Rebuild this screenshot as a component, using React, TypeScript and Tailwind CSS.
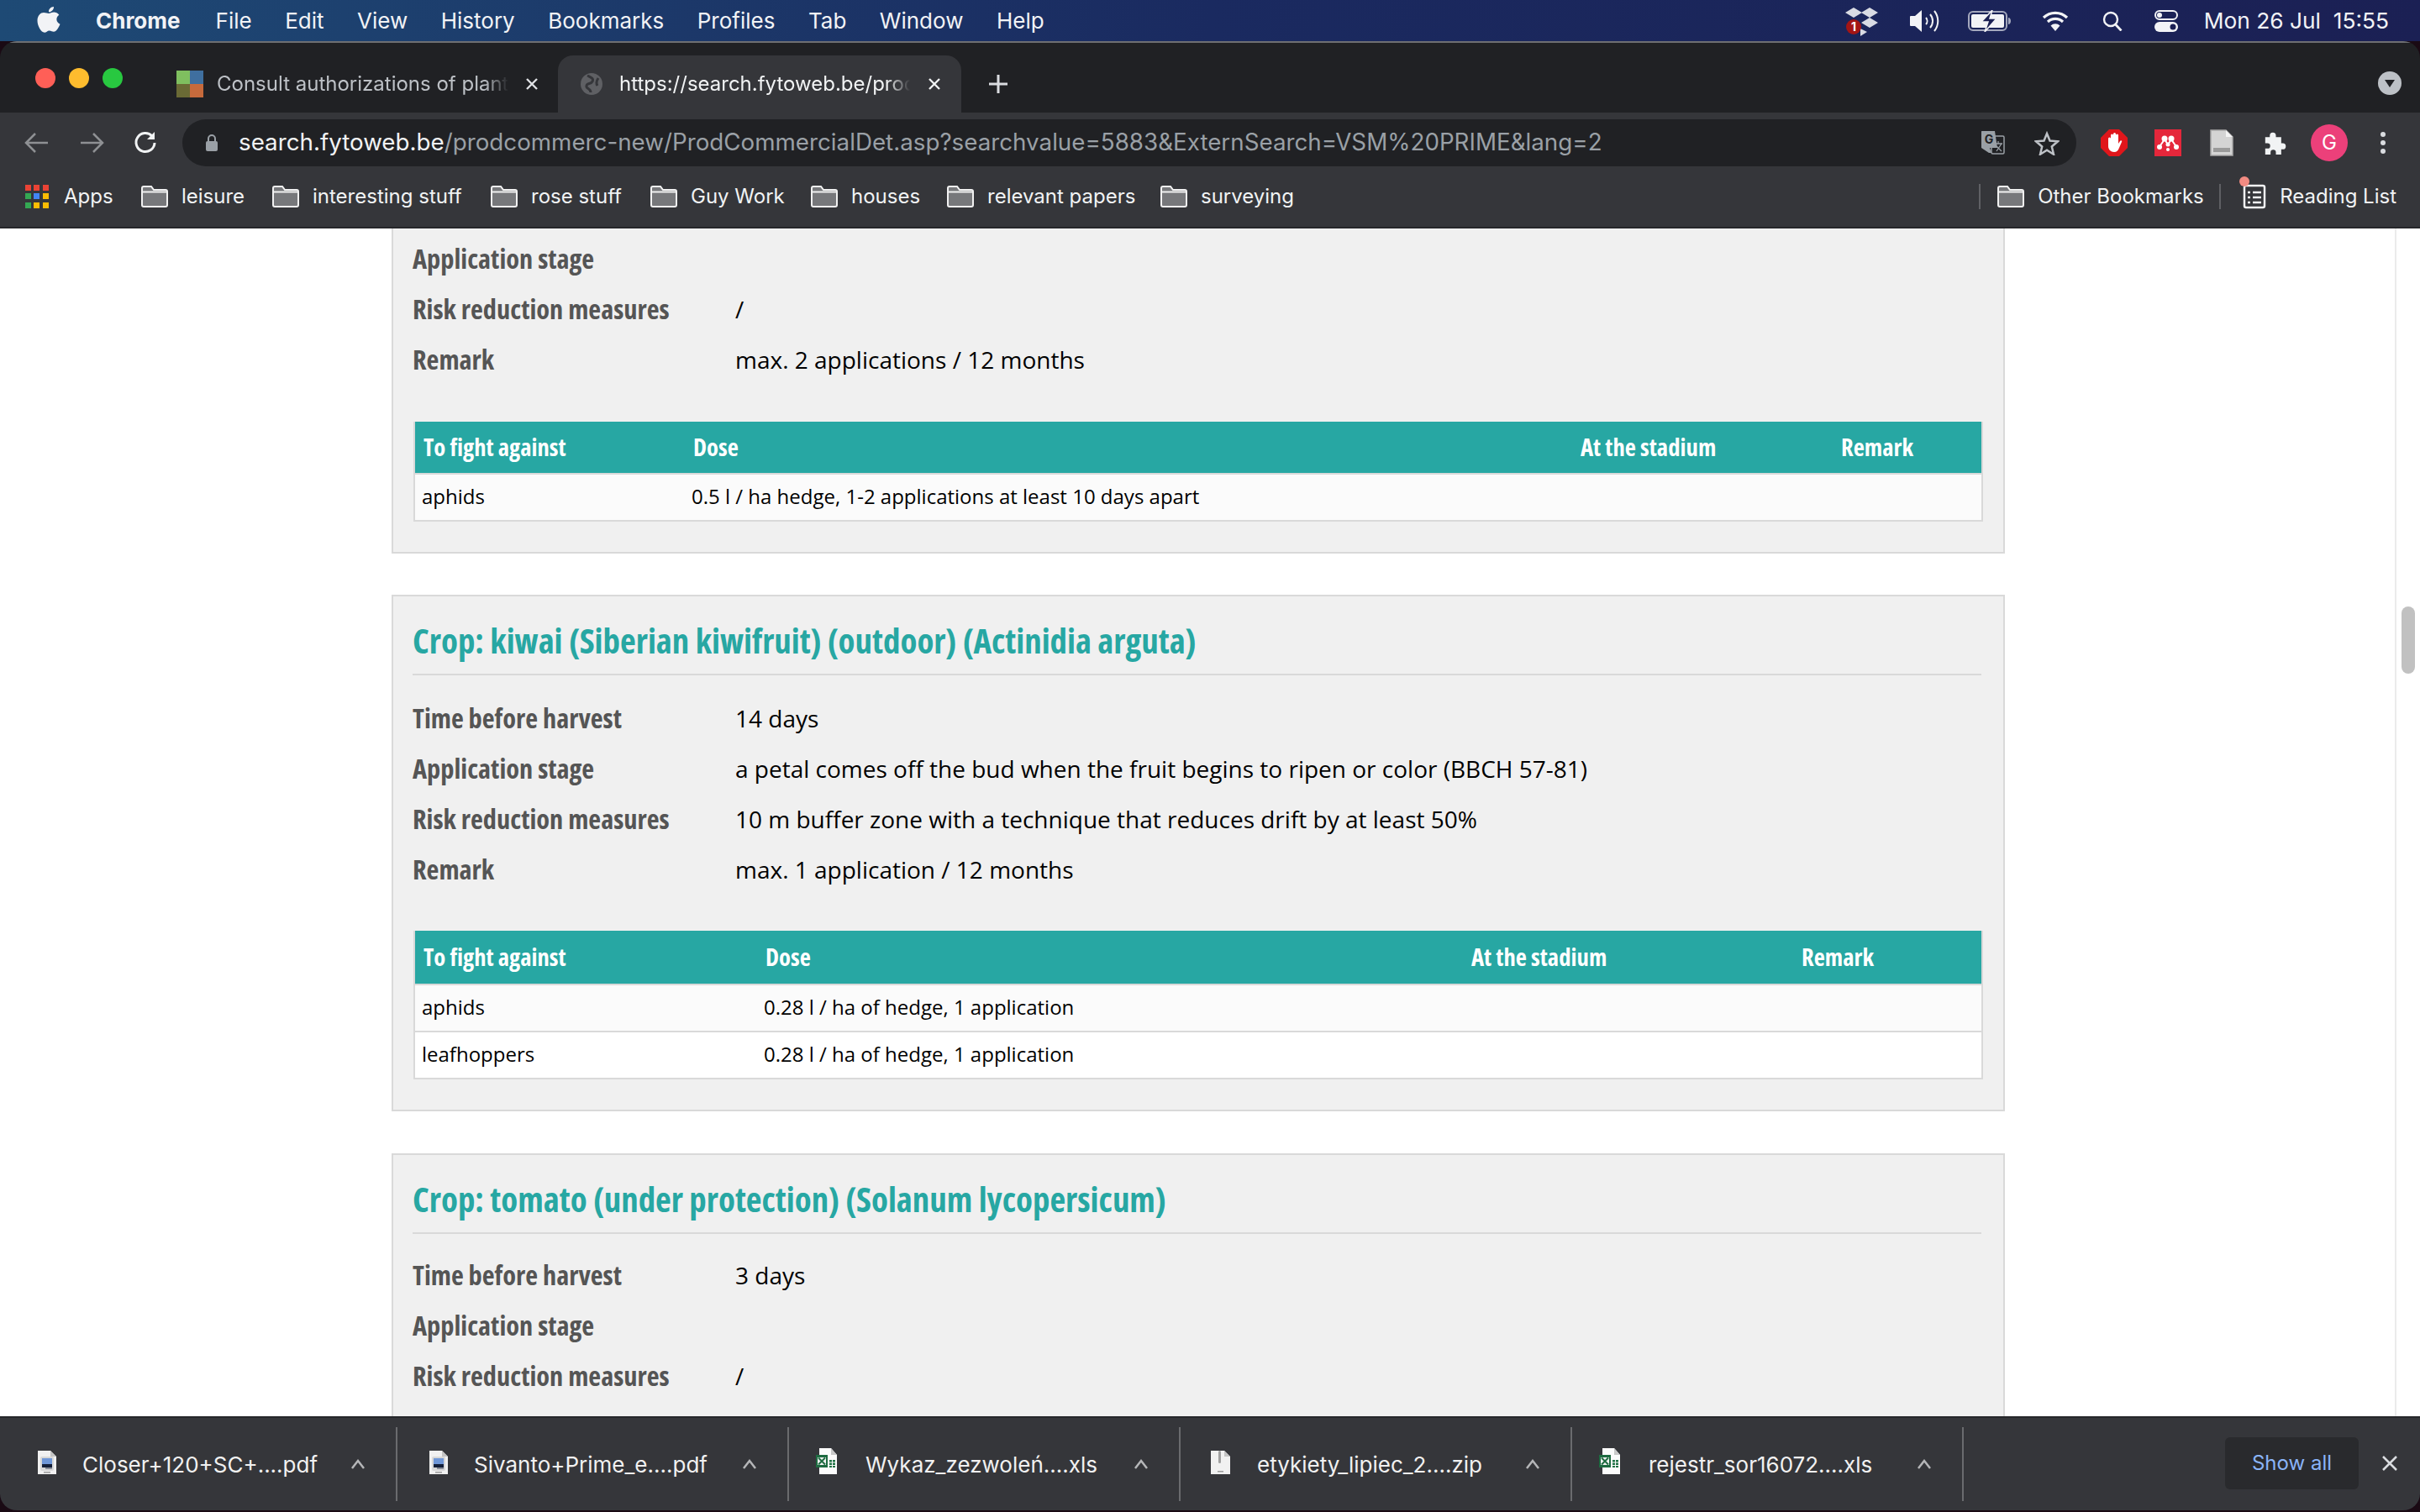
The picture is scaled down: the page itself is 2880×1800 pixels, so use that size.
import React from "react";
const sf = "font-['Inter','Liberation_Sans',sans-serif]";
const Folder = () => (
  <svg width="32" height="26" viewBox="0 0 32 26" className="shrink-0">
    <path d="M1 3a2 2 0 0 1 2-2h9l3 4h14a2 2 0 0 1 2 2v16a2 2 0 0 1-2 2H3a2 2 0 0 1-2-2z" fill="#77787b" stroke="#f1f1f1" strokeWidth="2" />
    <path d="M1 7.500h30" stroke="#f1f1f1" strokeWidth="2" />
  </svg>
);
const Apps = () => (
  <div className="grid grid-cols-3 gap-[3px] w-[28px] h-[28px]">
    {["#ea4335","#ea4335","#ea4335","#34a853","#4285f4","#fbbc04","#34a853","#fbbc04","#fbbc04"].map((c, i) => (
      <div key={i} style={{ background: c }} className="w-[7px] h-[7px]" />
    ))}
  </div>
);
const Bm = ({ t, w }: { t: string; w: string }) => (
  <div className={`flex items-center gap-[16px] ${w}`}>
    <Folder />
    <span>{t}</span>
  </div>
);
const Row = ({ l, v }: { l: string; v?: string }) => (
  <div className="flex h-[60px] items-center">
    <div className="w-[384px] text-[32.400px] font-bold text-[#555] [font-stretch:75%] -mt-[4px]">{l}</div>
    <div className="text-[28px] text-black -mt-[3px]">{v}</div>
  </div>
);
type T = { cols: string[]; rows: string[][]; head: string };
const Table = ({ cols, rows, head }: T) => (
  <table className="table-fixed w-[1866px] border-collapse ml-[1px] border-2 border-[#d9d9d9] border-t-0">
    <colgroup>
      {cols.map((c, i) => <col key={i} style={{ width: c }} />)}
    </colgroup>
    <thead>
      <tr className={`bg-[#27a7a3] ${head} text-white text-[28.700px] font-bold [font-stretch:75%] text-left`}>
        {["To fight against", "Dose", "At the stadium", "Remark"].map((h) => <th key={h} className="pl-[10px] pb-[2px] font-bold">{h}</th>)}
      </tr>
    </thead>
    <tbody>
      {rows.map((r, i) => (
        <tr key={i} className={`h-[56px] border-t-2 border-[#d9d9d9] text-[24px] text-black ${i % 2 ? "bg-white" : "bg-[#fbfbfb]"}`}>
          {r.map((c, j) => <td key={j} className="pl-[8px] pb-[2px]">{c}</td>)}
          <td /><td />
        </tr>
      ))}
    </tbody>
  </table>
);
const Heading = ({ t }: { t: string }) => (
  <div className="h-[70px] border-b-2 border-[#d9d9d9] text-[40.900px] leading-[56px] font-bold text-[#27a7a3] [font-stretch:75%]">{t}</div>
);
const Chev = () => (
  <svg width="18" height="12" viewBox="0 0 18 12"><path d="M2 11l7-9 7 9" fill="none" stroke="#b5b6b8" strokeWidth="2.500" /></svg>
);
const X = ({ c }: { c: string }) => (
  <svg width="14" height="14" viewBox="0 0 14 14" className="shrink-0"><path d="M1 1l12 12M13 1L1 13" stroke={c} strokeWidth="2.400" /></svg>
);
const FileIcon = ({ kind }: { kind: "pdf" | "xls" | "zip" }) => (
  <svg width="34" height="36" viewBox="0 0 34 36">
    {kind === "pdf" && <>
      <path d="M8 4h15l7 7v21H8z" fill="#f1f1f1" /><path d="M23 4v7h7z" fill="#c4c4c4" />
      <rect x="11" y="11" width="16" height="17" rx="2" fill="#d8d8d8" />
      <rect x="13" y="13" width="12" height="7" fill="#6f97d8" /><rect x="13" y="20" width="12" height="4" fill="#14203a" /><rect x="17" y="24" width="8" height="2" fill="#8a8f99" />
      <rect x="15" y="29" width="8" height="1.500" fill="#9a9a9a" />
    </>}
    {kind === "zip" && <>
      <path d="M6 4h16l7 7v21H6z" fill="#f1f1f1" /><path d="M22 4v7h7z" fill="#c4c4c4" />
      <rect x="15" y="4" width="3" height="15" rx="1.500" fill="#a0a0a0" /><rect x="14" y="28" width="7" height="1.500" fill="#9a9a9a" />
    </>}
    {kind === "xls" && <>
      <path d="M6 1h14l7 8v23H6z" fill="#fbfbfb" /><path d="M20 1v8h7z" fill="#c8c8c8" />
      <rect x="2" y="9" width="14" height="15" fill="#1e6b41" /><rect x="4" y="12" width="10" height="9" fill="#f2f2f2" /><path d="M5 12.500l8 8M13 12.500l-8 8" stroke="#1e6b41" strokeWidth="2" />
      <path d="M18 15h3v2.500h-3zM22 15h3v2.500h-3zM18 18.500h3V21h-3zM22 18.500h3V21h-3zM18 22h3v2h-3zM22 22h3v2h-3z" fill="#1f7245" />
    </>}
  </svg>
);
const Dl = ({ n, k }: { n: string; k: "pdf" | "xls" | "zip" }) => (
  <div className="w-[466px] h-[88px] shrink-0 flex items-center border-r-2 border-[#6a6b6e] pl-[30px] pr-[36px] text-[26px] text-[#f1f1f1]">
    <div className="w-[61px] -mt-[4px]"><FileIcon kind={k} /></div>
    <span className="flex-1 whitespace-nowrap">{n}</span>
    <Chev />
  </div>
);
const Tray = () => (
  <div className="flex items-center text-[#f2f3f6]">
    <svg width="40" height="36" viewBox="0 0 40 36" className="mr-[36px]">
      <path d="M10 2l10 6-10 6L0 8zM29 2l10 6-10 6-10-6zM29 14l10 6-10 6-10-6z" fill="#d9dbe3" />
      <path d="M18 27l8 4-8 5z" fill="#d9dbe3" />
      <circle cx="10" cy="25" r="9" fill="#a31515" />
      <text x="10" y="30" fontSize="14" fontWeight="700" fill="#fff" textAnchor="middle">1</text>
    </svg>
    <svg width="36" height="28" viewBox="0 0 36 28" className="mr-[34px]"><path d="M1 9q0-1 1-1h5l8-7v26l-8-7H2q-1 0-1-1z" fill="currentColor" /><path d="M20 10a6 6 0 0 1 0 8M25 6a12 12 0 0 1 0 16M30 2a19 19 0 0 1 0 24" stroke="currentColor" strokeWidth="2" fill="none" /></svg>
    <svg width="52" height="26" viewBox="0 0 52 26" className="mr-[36px]">
      <rect x="1" y="2" width="45" height="22" rx="5" fill="none" stroke="#a4a8bd" strokeWidth="2" />
      <rect x="4" y="5" width="39" height="16" rx="2" fill="#f2f3f6" />
      <path d="M29 0L16 14h8l-4 12 14-16h-8z" fill="#1b2054" stroke="#f2f3f6" strokeWidth="1.500" />
      <path d="M48 9v8c2 0 3-2 3-4s-1-4-3-4" fill="#a4a8bd" />
    </svg>
    <svg width="32" height="24" viewBox="0 0 32 24" className="mr-[40px]"><path d="M2 8a20 20 0 0 1 28 0M7 13a13 13 0 0 1 18 0" fill="none" stroke="currentColor" strokeWidth="3.200" /><path d="M10.500 17.500a8 8 0 0 1 11 0L16 24z" fill="currentColor" /></svg>
    <svg width="24" height="24" viewBox="0 0 24 24" className="mr-[38px]"><circle cx="10" cy="10" r="8" fill="none" stroke="currentColor" strokeWidth="2.400" /><path d="M15.500 16l7 7.500" stroke="currentColor" strokeWidth="2.800" /></svg>
    <svg width="28" height="26" viewBox="0 0 28 26" className="mr-[31px]"><rect x="1" y="1" width="26" height="10" rx="5" fill="none" stroke="currentColor" strokeWidth="2" /><circle cx="6" cy="6" r="3" fill="currentColor" /><rect x="0" y="14" width="28" height="12" rx="6" fill="currentColor" /><circle cx="22" cy="20" r="3.500" fill="#1b2054" /></svg>
    <span className="text-[26.300px] whitespace-nowrap">Mon 26 Jul&nbsp;&nbsp;15:55</span>
  </div>
);
export default function App() {
  return (
    <div className="w-[2880px] h-[1800px] flex flex-col overflow-hidden bg-[#1a0a14] font-['Open_Sans',sans-serif]">
      {/* menu bar */}
      <div className={`h-[49px] shrink-0 flex items-center justify-between bg-gradient-to-r from-[#1e4a75] via-[#1a2a60] to-[#1b2054] pl-[44px] pr-[37px] text-[26px] text-[#f2f3f6] ${sf}`}>
        <div className="flex items-center">
          <svg width="28" height="32" viewBox="0 0 28 32" className="mr-[42px] -mt-[3px]"><path d="M20 1c.3 3-2.500 6.500-6 6.300C13.600 4 16.700 1 20 1zM14 9c1.500 0 3.500-1.600 6.300-1.600 2 0 4.500 1 6 3.300-4.500 3-3.500 9 1.200 11-1.500 4-4.500 9-7.500 9-2 0-3-1.300-5.300-1.300S11 31.700 9 31.700C5 31.700.5 24 .5 17.500.5 11.300 4.500 8 8 8c2.500 0 4.500 1 6 1z" fill="#f2f3f6" /></svg>
          <span className="font-bold mr-[42px]">Chrome</span>
          <div className="flex gap-[39.500px]">
            {["File","Edit","View","History","Bookmarks","Profiles","Tab","Window","Help"].map((m) => <span key={m}>{m}</span>)}
          </div>
        </div>
        <Tray />
      </div>
      {/* window */}
      <div className="flex-1 flex flex-col mb-[2px] rounded-t-[20px] rounded-b-[20px] overflow-hidden min-h-0">
        <div className={`h-[85px] shrink-0 bg-[#202124] border-t-2 border-[#6e6f72] flex items-end ${sf}`}>
          <div className="flex items-center gap-[16px] pl-[42px] h-[83px] w-[210px] shrink-0">
            <div className="w-[24px] h-[24px] rounded-full bg-[#ff5f57]" />
            <div className="w-[24px] h-[24px] rounded-full bg-[#febc2e]" />
            <div className="w-[24px] h-[24px] rounded-full bg-[#28c840]" />
          </div>
          <div className="h-[68px] w-[454px] shrink-0 flex items-center text-[24px] text-[#bdc1c6]">
            <div className="grid grid-cols-2 w-[32px] h-[32px] shrink-0 mr-[16px]">
              <div className="bg-[#7fbf5f]" /><div className="bg-[#3f6f9f]" /><div className="bg-[#6a6a35]" /><div className="bg-[#c66a3c]" />
            </div>
            <div className="w-[347px] whitespace-nowrap [mask-image:linear-gradient(to_right,black_92%,transparent)]">Consult authorizations of plant</div>
            <div className="ml-[21px]"><X c="#dfe1e5" /></div>
          </div>
          <div className="h-[68px] w-[480px] shrink-0 flex items-center rounded-t-[18px] bg-[#35363a] pl-[26px] text-[24px] text-[#f1f3f4]">
            <svg width="28" height="28" viewBox="0 0 28 28" className="mr-[19px] shrink-0"><circle cx="14" cy="14" r="13" fill="#5f6064" /><path d="M9 4c4 2 8 3 6 7s-6 1-7 5 5 3 5 8M22 7c-2 3-3 6-1 9" stroke="#35363a" strokeWidth="3" fill="none" /></svg>
            <div className="w-[346px] whitespace-nowrap [mask-image:linear-gradient(to_right,black_92%,transparent)]">https://search.fytoweb.be/prod</div>
            <div className="ml-[22px]"><X c="#f1f3f4" /></div>
          </div>
          <svg width="24" height="24" viewBox="0 0 24 24" className="ml-[32px] mb-[22px] shrink-0"><path d="M12 1v22M1 12h22" stroke="#dadce0" strokeWidth="3" /></svg>
          <div className="flex-1" />
          <div className="w-[28px] h-[28px] rounded-full bg-[#bdc1c6] flex items-center justify-center mr-[22px] mb-[21px]">
            <div className="w-0 h-0 border-l-[6px] border-r-[6px] border-t-[9px] border-l-transparent border-r-transparent border-t-[#202124]" />
          </div>
        </div>
        <div className={`h-[138px] shrink-0 bg-[#35363a] border-b-2 border-[#26272a] ${sf}`}>
          <div className="h-[72px] flex items-center">
            <svg width="30" height="28" viewBox="0 0 30 28" className="ml-[29px] mr-[35px]"><path d="M28 14H3M13 3L2 14l11 11" fill="none" stroke="#8e9093" strokeWidth="2.500" /></svg>
            <svg width="30" height="28" viewBox="0 0 30 28" className="mr-[34px]"><path d="M2 14h25M17 3l11 11-11 11" fill="none" stroke="#8e9093" strokeWidth="2.500" /></svg>
            <svg width="30" height="30" viewBox="0 0 30 30" className="mr-[29px]"><path d="M26 15a11 11 0 1 1-3-8" fill="none" stroke="#f1f3f4" strokeWidth="3" /><path d="M26 2v9h-9z" fill="#f1f3f4" /></svg>
            <div className="w-[2254px] h-[56px] rounded-full bg-[#202124] flex items-center pl-[27px] pr-[20px] text-[27.750px]">
              <svg width="16" height="22" viewBox="0 0 16 22" className="mr-[24px] shrink-0"><path d="M4 10V6a4 4 0 0 1 8 0v4" fill="none" stroke="#9aa0a6" strokeWidth="2" /><rect x="1" y="9" width="14" height="12" rx="2" fill="#9aa0a6" /></svg>
              <span className="whitespace-nowrap flex-1"><span className="text-[#f1f3f4]">search.fytoweb.be</span><span className="text-[#9aa0a6]">/prodcommerc-new/ProdCommercialDet.asp?searchvalue=5883&amp;ExternSearch=VSM%20PRIME&amp;lang=2</span></span>
              <svg width="28" height="28" viewBox="0 0 28 28" className="mr-[35px] shrink-0"><rect x="12" y="6" width="15" height="21" rx="1.500" fill="#202124" stroke="#9aa0a6" strokeWidth="1.500" /><path d="M2 0h14l3 20h-9l2 6-3 0-9-6q-1 0-1-2V2q0-2 2-2z" fill="#9aa0a6" /><text x="9" y="15" fontSize="14" fontWeight="700" fill="#202124" textAnchor="middle">G</text><path d="M16 15h9M20 12v3M24 15l-6 9M18 18l6 6" stroke="#9aa0a6" strokeWidth="1.300" fill="none" /></svg>
              <svg width="30" height="29" viewBox="0 0 30 29" className="shrink-0"><path d="M15 3l3.500 8.500 9.500.8-7.200 6.200 2.200 9.200L15 22.700 7 27.700l2.200-9.200L2 12.300l9.500-.8z" fill="none" stroke="#bdc1c6" strokeWidth="2.500" /></svg>
            </div>
            <svg width="32" height="32" viewBox="0 0 32 32" className="ml-[29px] shrink-0"><path d="M10 0h12l10 10v12L22 32H10L0 22V10z" fill="#e0161b" /><path d="M9 19v-8a1.300 1.300 0 0 1 3 0v3-7a1.300 1.300 0 0 1 3 0v6-7.500a1.300 1.300 0 0 1 3 0V13 7a1.300 1.300 0 0 1 3 0v10l2-3c1-1.500 3-.5 2 1l-3 7c-1 3-3 5-6 5-4 0-7-3-7-7z" fill="#fff" /></svg>
            <div className="ml-[32px] w-[32px] h-[32px] bg-[#e5273b] shrink-0 flex items-center justify-center">
              <svg width="26" height="20" viewBox="0 0 26 20"><path d="M2 16l7-10 4 6 4-6 7 10" fill="none" stroke="#fff" strokeWidth="2" /><circle cx="9" cy="5" r="3.500" fill="#fff" /><circle cx="17" cy="5" r="3.500" fill="#fff" /><circle cx="13" cy="12" r="2.500" fill="#fff" /><circle cx="3" cy="15" r="3" fill="#fff" /><circle cx="23" cy="15" r="3" fill="#fff" /><circle cx="13" cy="18" r="2" fill="#fff" /></svg>
            </div>
            <svg width="28" height="32" viewBox="0 0 28 32" className="ml-[34px] shrink-0"><path d="M1 1h18l8 8v22H1z" fill="#d4d4d4" stroke="#a9a9a9" strokeWidth="1.500" /><path d="M19 1v8h8z" fill="#f4f4f4" /><rect x="4" y="22" width="20" height="5" fill="#9a9a9a" /></svg>
            <svg width="29" height="29" viewBox="0 0 32 32" className="ml-[36px] shrink-0"><path d="M12 2a4 4 0 0 1 4 4v2h7v8h2a4 4 0 0 1 0 8h-2v7h-7v-3a3.500 3.500 0 0 0-7 0v3H2v-8h3a3.500 3.500 0 0 0 0-7H2V8h6V6a4 4 0 0 1 4-4z" fill="#f1f3f4" /></svg>
            <div className="ml-[27px] w-[44px] h-[44px] rounded-full bg-[#ec407a] text-white text-[24px] flex items-center justify-center shrink-0">G</div>
            <div className="ml-[39px] flex flex-col gap-[4px] shrink-0">
              <div className="w-[6px] h-[6px] rounded-full bg-[#dadce0]" /><div className="w-[6px] h-[6px] rounded-full bg-[#dadce0]" /><div className="w-[6px] h-[6px] rounded-full bg-[#dadce0]" />
            </div>
          </div>
          <div className="h-[56px] flex items-center text-[24px] text-[#f1f3f4] pr-[28px]">
            <div className="ml-[30px] flex items-center gap-[18px] w-[138px]"><Apps /><span>Apps</span></div>
            <Bm t="leisure" w="w-[156px]" />
            <Bm t="interesting stuff" w="w-[260px]" />
            <Bm t="rose stuff" w="w-[190px]" />
            <Bm t="Guy Work" w="w-[191px]" />
            <Bm t="houses" w="w-[162px]" />
            <Bm t="relevant papers" w="w-[254px]" />
            <Bm t="surveying" w="w-[200px]" />
            <div className="flex-1" />
            <div className="w-[2px] h-[30px] bg-[#5f6064] mr-[20px]" />
            <Bm t="Other Bookmarks" w="w-[264px]" />
            <div className="w-[2px] h-[30px] bg-[#5f6064] mr-[26px]" />
            <div className="relative flex items-center gap-[16px]">
              <div className="absolute -top-[6px] -left-[4px] w-[12px] h-[12px] rounded-full bg-[#f28b82]" />
              <svg width="28" height="30" viewBox="0 0 28 30"><rect x="2" y="2" width="24" height="26" rx="2" fill="none" stroke="#f1f3f4" strokeWidth="2.500" /><path d="M6 10h3M12 10h10M6 16h3M12 16h10M6 22h3M12 22h10" stroke="#f1f3f4" strokeWidth="2.500" /></svg>
              <span>Reading List</span>
            </div>
          </div>
        </div>
        {/* page */}
        <div className="flex-1 min-h-0 bg-white relative overflow-hidden">
          <div className="w-[1920px] ml-[466px]">
            <div className="h-[389px] -mt-[2px] border-2 border-[#d9d9d9] bg-[#f0f0f0] pl-[23px] pr-[26px] pt-[7px]">
              <Row l="Application stage" />
              <Row l="Risk reduction measures" v="/" />
              <Row l="Remark" v="max. 2 applications / 12 months" />
              <div className="mt-[43px]">
                <Table head="h-[62px]" cols={["322px", "1056px", "310px", "178px"]} rows={[["aphids", "0.5 l / ha hedge, 1-2 applications at least 10 days apart"]]} />
              </div>
            </div>
            <div className="h-[615px] mt-[49px] border-2 border-[#d9d9d9] bg-[#f0f0f0] pl-[23px] pr-[26px] pt-[24px]">
              <Heading t="Crop: kiwai (Siberian kiwifruit) (outdoor) (Actinidia arguta)" />
              <div className="mt-[22px]">
                <Row l="Time before harvest" v="14 days" />
                <Row l="Application stage" v="a petal comes off the bud when the fruit begins to ripen or color (BBCH 57-81)" />
                <Row l="Risk reduction measures" v="10 m buffer zone with a technique that reduces drift by at least 50%" />
                <Row l="Remark" v="max. 1 application / 12 months" />
              </div>
              <div className="mt-[42px]">
                <Table head="h-[64px]" cols={["408px", "840px", "393px", "225px"]} rows={[["aphids", "0.28 l / ha of hedge, 1 application"], ["leafhoppers", "0.28 l / ha of hedge, 1 application"]]} />
              </div>
            </div>
            <div className="mt-[50px] border-2 border-b-0 border-[#d9d9d9] bg-[#f0f0f0] pl-[23px] pr-[26px] pt-[24px] h-[400px]">
              <Heading t="Crop: tomato (under protection) (Solanum lycopersicum)" />
              <div className="mt-[20px]">
                <Row l="Time before harvest" v="3 days" />
                <Row l="Application stage" />
                <Row l="Risk reduction measures" v="/" />
              </div>
            </div>
          </div>
          <div className="absolute top-0 bottom-0 right-0 w-[30px] bg-white border-l-2 border-[#ebebeb]">
            <div className="absolute top-[450px] left-[6px] w-[16px] h-[80px] rounded-full bg-[#c1c1c1]" />
          </div>
        </div>
        {/* shelf */}
        <div className={`h-[112px] shrink-0 bg-[#35363a] border-t-2 border-[#26272a] flex items-center ${sf}`}>
          <div className="w-[7px] shrink-0" />
          <Dl n="Closer+120+SC+....pdf" k="pdf" />
          <Dl n="Sivanto+Prime_e....pdf" k="pdf" />
          <Dl n="Wykaz_zezwoleń....xls" k="xls" />
          <Dl n="etykiety_lipiec_2....zip" k="zip" />
          <Dl n="rejestr_sor16072....xls" k="xls" />
          <div className="flex-1" />
          <div className="w-[159px] h-[62px] mb-[2px] rounded-[6px] bg-[#292a2d] text-[#8ab4f8] text-[24px] flex items-center justify-center">Show all</div>
          <svg width="20" height="20" viewBox="0 0 20 20" className="ml-[27px] mr-[26px] mb-[2px]"><path d="M2 2l16 16M18 2L2 18" stroke="#dadce0" strokeWidth="2.500" /></svg>
        </div>
      </div>
    </div>
  );
}
